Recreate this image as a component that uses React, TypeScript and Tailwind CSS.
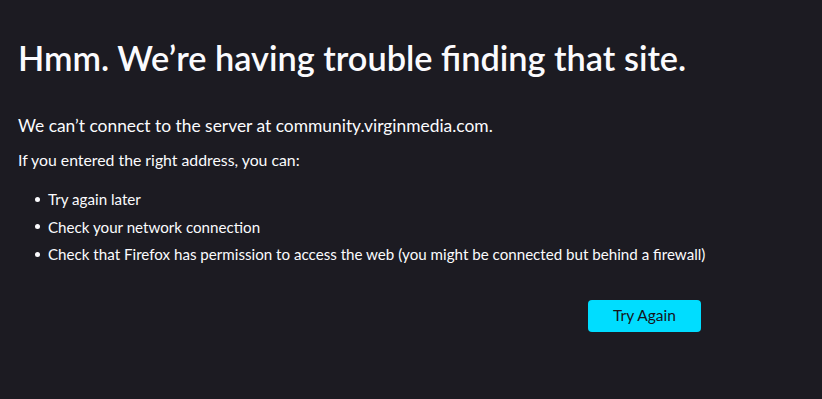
export default function App() {
  const items = [
    "Try again later",
    "Check your network connection",
    "Check that Firefox has permission to access the web (you might be connected but behind a firewall)",
  ];

  return (
    <div className="min-h-screen w-full bg-[#1c1b22] text-[#fbfbfe] font-['Lato',sans-serif]">
      <div className="w-[701px] pl-[18px] pt-[35px]">
        <h1 className="text-[34.3px] leading-[46px] font-semibold whitespace-nowrap">Hmm. We’re having trouble finding that site.</h1>
        <p className="mt-[33px] text-[17.4px] leading-[24px]">We can’t connect to the server at community.virginmedia.com.</p>
        <p className="mt-[11px] text-[15.8px] leading-[22px]">If you entered the right address, you can:</p>
        <ul className="mt-[17px] flex flex-col gap-[5.5px] text-[15.15px] leading-[22px] whitespace-nowrap">
          {items.map((t) => (
            <li key={t} className="flex items-center">
              <span className="ml-[17px] mr-[8px] h-[5px] w-[5px] shrink-0 rounded-full bg-[#fbfbfe]" />
              <span>{t}</span>
            </li>
          ))}
        </ul>
        <div className="mt-[35px] flex justify-end">
          <button className="h-[32px] w-[113px] rounded-[4px] bg-[#00ddff] text-[15.5px] text-[#15141a]">Try Again</button>
        </div>
      </div>
    </div>
  );
}
